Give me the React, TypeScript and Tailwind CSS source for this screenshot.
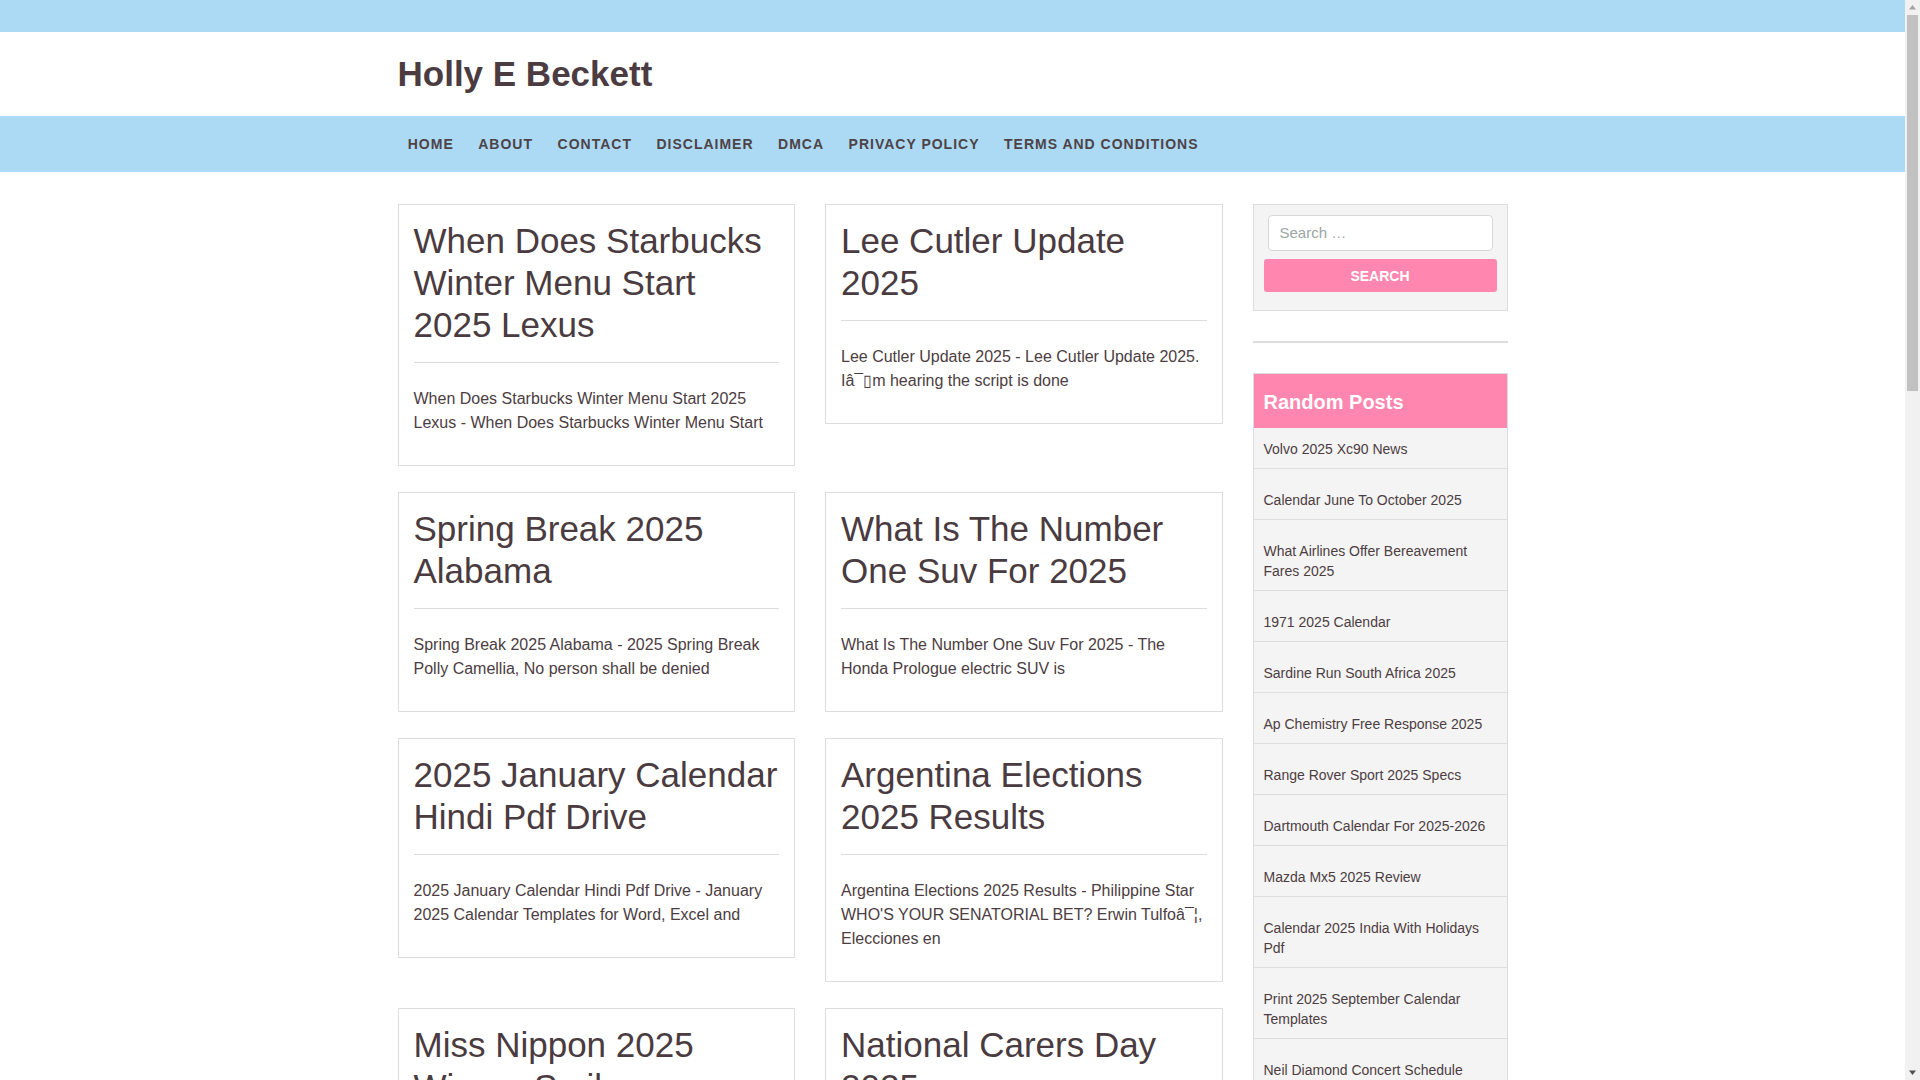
import React from "react";

const posts = [
  {
    title: "When Does Starbucks Winter Menu Start 2025 Lexus",
    excerpt: "When Does Starbucks Winter Menu Start 2025 Lexus - When Does Starbucks Winter Menu Start",
  },
  {
    title: "Lee Cutler Update 2025",
    excerpt: "Lee Cutler Update 2025 - Lee Cutler Update 2025. I\u00e2\u00af\u25afm hearing the script is done",
  },
  {
    title: "Spring Break 2025 Alabama",
    excerpt: "Spring Break 2025 Alabama - 2025 Spring Break Polly Camellia, No person shall be denied",
  },
  {
    title: "What Is The Number One Suv For 2025",
    excerpt: "What Is The Number One Suv For 2025 - The Honda Prologue electric SUV is",
  },
  {
    title: "2025 January Calendar Hindi Pdf Drive",
    excerpt: "2025 January Calendar Hindi Pdf Drive - January 2025 Calendar Templates for Word, Excel and",
  },
  {
    title: "Argentina Elections 2025 Results",
    excerpt:
      "Argentina Elections 2025 Results - Philippine Star WHO'S YOUR SENATORIAL BET? Erwin Tulfo\u00e2\u00af\u00a6, Elecciones en",
  },
  {
    title: "Miss Nippon 2025 Winner Smile",
    excerpt: "Miss Nippon 2025 Winner Smile - Miss Nippon 2025 winner announced at the annual contest",
  },
  {
    title: "National Carers Day 2025",
    excerpt: "National Carers Day 2025 - National Carers Day 2025 is a day to celebrate carers",
  },
];

const randomPosts = [
  "Volvo 2025 Xc90 News",
  "Calendar June To October 2025",
  "What Airlines Offer Bereavement Fares 2025",
  "1971 2025 Calendar",
  "Sardine Run South Africa 2025",
  "Ap Chemistry Free Response 2025",
  "Range Rover Sport 2025 Specs",
  "Dartmouth Calendar For 2025-2026",
  "Mazda Mx5 2025 Review",
  "Calendar 2025 India With Holidays Pdf",
  "Print 2025 September Calendar Templates",
  "Neil Diamond Concert Schedule 2025",
  "Key West Fantasy Fest 2025 Dates",
  "Nfl Draft 2025 Mock Draft",
];

const navItems = ["Home", "About", "Contact", "Disclaimer", "DMCA", "Privacy Policy", "Terms and Conditions"];

function Scrollbar() {
  return (
    <div className="fixed top-0 right-0 w-[15px] h-screen bg-[#f1f1f1] flex flex-col items-center">
      <svg width="15" height="15" viewBox="0 0 15 15" className="shrink-0">
        <path d="M4 9.5 L7.5 5 L11 9.5 Z" fill="#a3a3a3" />
      </svg>
      <div className="w-[11px] h-[376px] bg-[#c1c1c1]" />
      <div className="flex-1" />
      <svg width="15" height="15" viewBox="0 0 15 15" className="shrink-0">
        <path d="M4 5.5 L11 5.5 L7.5 10 Z" fill="#505050" />
      </svg>
    </div>
  );
}

export default function App() {
  return (
    <div className="min-h-screen bg-white pr-[15px] font-['Liberation_Sans',Arial,sans-serif] text-[#4c3d42]">
      <div className="h-[32px] bg-[#acd9f3]" />
      <header className="h-[84px] flex items-center">
        <div className="w-[1110px] mx-auto">
          <h1 className="text-[35px] leading-[42px] font-bold text-[#4b3c41]">Holly E Beckett</h1>
        </div>
      </header>
      <nav className="h-[56px] bg-[#acd9f3] flex items-center">
        <div className="w-[1110px] mx-auto">
          <ul className="flex ml-[-2px]">
            {navItems.map((n) => (
              <li key={n} className="px-[12.25px] text-[14px] leading-[20px] font-bold uppercase tracking-[1px] text-[#4d4347]">
                {n}
              </li>
            ))}
          </ul>
        </div>
      </nav>

      <div className="w-[1110px] mx-auto mt-[32px] flex gap-[30px] items-start pb-[40px]">
        <main className="w-[825px] grid grid-cols-2 gap-x-[30px] gap-y-[26px] items-start">
          {posts.map((p) => (
            <article key={p.title} className="border border-[#dddddd] p-[15px] pb-0">
              <h2 className="text-[35px] leading-[42px] text-[#4a3b40] mb-[16px]">{p.title}</h2>
              <div className="border-t border-[#dddddd]" />
              <p className="mt-[24px] mb-[30px] text-[16px] leading-[24px] text-[#4c3d42]">{p.excerpt}</p>
            </article>
          ))}
        </main>

        <aside className="w-[255px] flex flex-col">
          <div className="border border-[#dddddd] bg-[#f4f4f4] pt-[10px] px-[10px] pb-[18px]">
            <div className="mx-[4px] h-[36px] bg-white border border-[#d8d8d8] rounded-[4px] flex items-center px-[11px]">
              <span className="text-[15px] text-[#9ba6a6]">Search …</span>
            </div>
            <div className="mt-[8px] h-[33px] bg-[#ff86ae] rounded-[3px] flex items-center justify-center pt-[1px]">
              <span className="text-[14px] font-bold uppercase text-white">Search</span>
            </div>
          </div>

          <div className="mt-[30px] h-[2px] bg-[#dddddd]" />

          <div className="mt-[30px] border border-[#dddddd] bg-[#f4f4f4]">
            <h3 className="bg-[#ff86ae] px-[10px] pt-[13px] pb-[11px] text-[20px] leading-[30px] font-bold text-white">
              Random Posts
            </h3>
            <ul>
              {randomPosts.map((r, i) => (
                <li
                  key={r}
                  className={`px-[10px] pt-[11px] pb-[9px] border-b border-[#dddddd] text-[14px] leading-[20px] text-[#4c3d42] ${
                    i > 0 ? "mt-[10px]" : ""
                  }`}
                >
                  {r}
                </li>
              ))}
            </ul>
          </div>
        </aside>
      </div>
      <Scrollbar />
    </div>
  );
}
